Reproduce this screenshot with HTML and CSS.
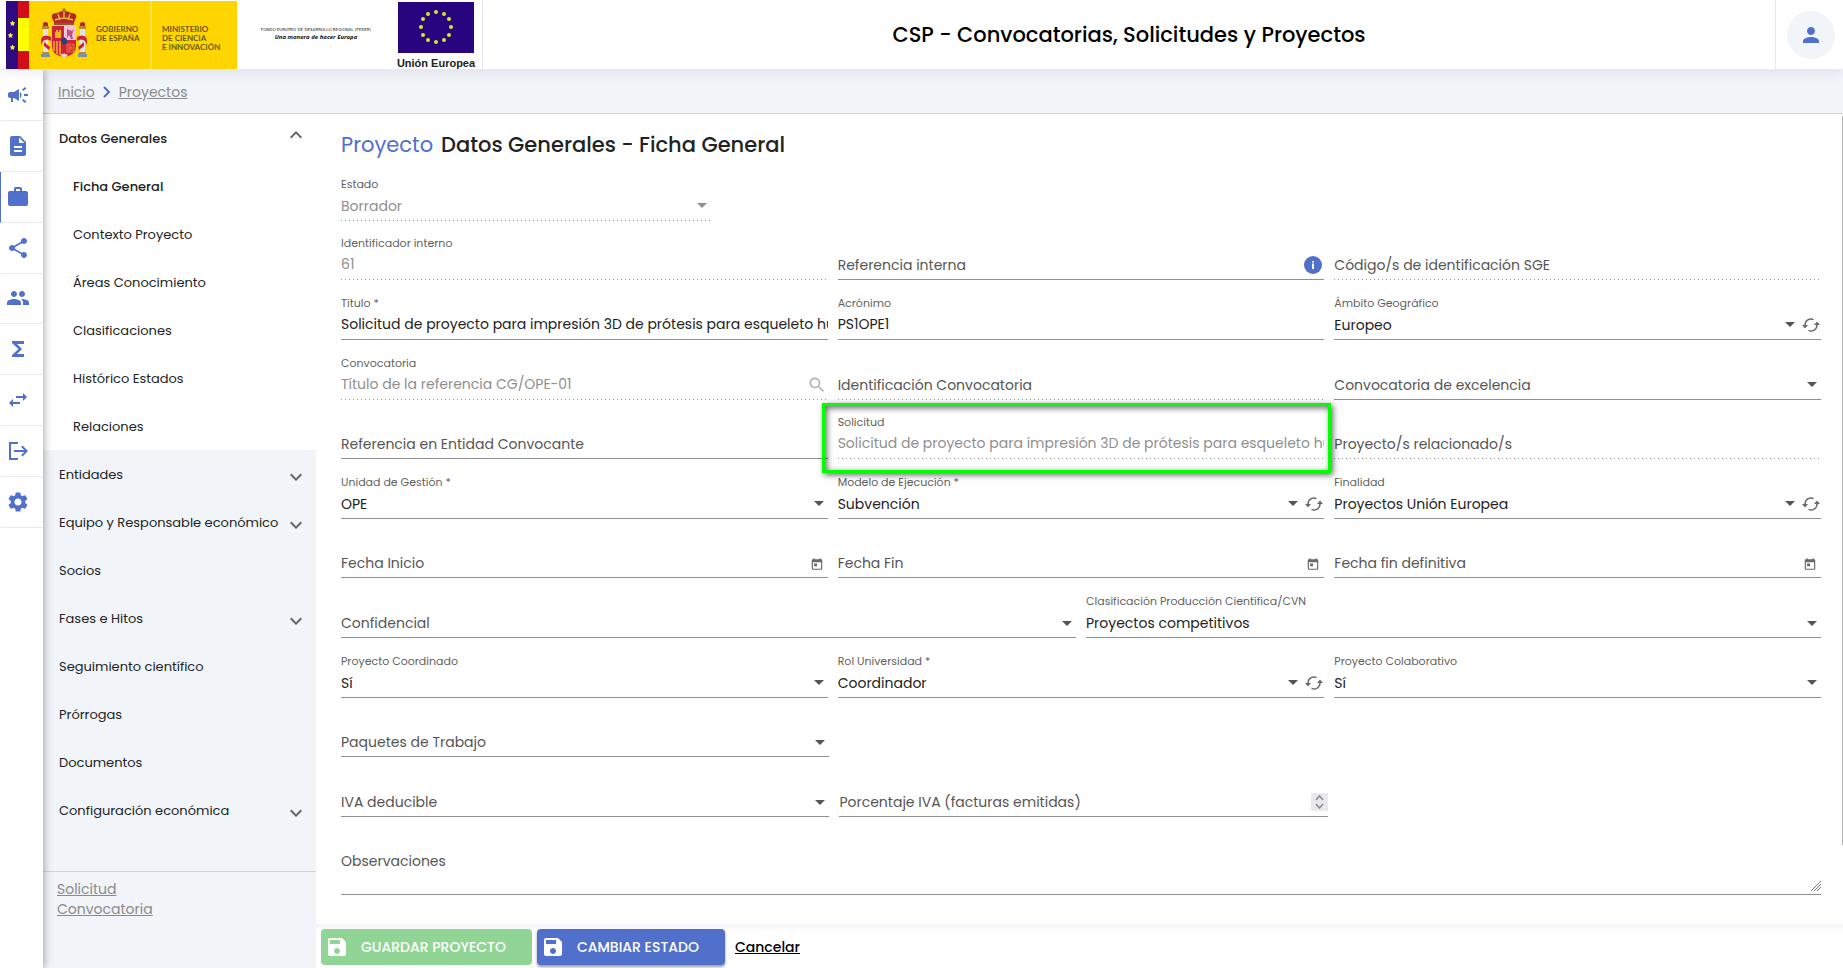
FILE: index.html
```html
<!DOCTYPE html>
<html lang="es">
<head>
<meta charset="utf-8">
<title>CSP - Convocatorias, Solicitudes y Proyectos</title>
<link rel="stylesheet" href="styles.css">
</head>
<body>
<svg class="defs" aria-hidden="true">
  <symbol id="caret" viewBox="0 0 10 5"><path d="M0 0h10L5 5z"/></symbol>
  <symbol id="chev" viewBox="0 0 24 24"><path d="M7.4 8.6 12 13.2l4.6-4.6L18 10l-6 6-6-6z"/></symbol>
  <symbol id="cached" viewBox="0 0 18 14"><path d="M3 8.500V7a6 6 0 0 1 8.500-5.400M15 5.500V7a6 6 0 0 1-8.500 5.400" fill="none" stroke="#6a6a6a" stroke-width="1.500"/><path d="M0 7h6l-3 3.500zM12 7h6l-3-3.500z"/></symbol>
  <symbol id="cal" viewBox="0 0 24 24"><path d="M19 4h-1V2h-2v2H8V2H6v2H5c-1.1 0-2 .9-2 2v14c0 1.1.9 2 2 2h14c1.1 0 2-.9 2-2V6c0-1.1-.9-2-2-2zm0 16H5V9h14v11zM7 11h5v5H7z"/></symbol>
  <symbol id="save" viewBox="0 0 24 24"><path d="M17 3H5c-1.11 0-2 .9-2 2v14c0 1.1.89 2 2 2h14c1.1 0 2-.9 2-2V7l-4-4zm-5 16c-1.66 0-3-1.34-3-3s1.34-3 3-3 3 1.34 3 3-1.34 3-3 3zm3-10H5V5h10v4z"/></symbol>
</svg>

<header class="header">
  <svg class="logos" viewBox="0 0 482 70" role="img" aria-label="Gobierno de España, Fondo Europeo de Desarrollo Regional, Unión Europea">
    <rect x="6" y="1" width="231" height="68" fill="#ffd500"/>
    <rect x="6" y="1" width="12" height="68" fill="#2d0a80"/>
    <rect x="18" y="1" width="11" height="68" fill="#d40d19"/>
    <rect x="18" y="18" width="11" height="33" fill="#ff0"/>
    <g fill="#f4ef3a"><path id="star" d="M12.500 20.500l.9 1.800 2 .2-1.500 1.400.4 2-1.800-1-1.800 1 .4-2-1.500-1.400 2-.2z"/><use href="#star" x="-2" y="12"/><use href="#star" y="24"/></g>
    <path d="M151 1v68" stroke="#fff08a"/>
    <g>
      <path d="M53 20q-4-7 4-7 3-2 7-2t7 2q8 0 4 7l-2 5H55z" fill="#b3282b"/>
      <path d="M55 20q9-4 18 0M64 10v9M58 14l2 6M70 14l-2 6" stroke="#e2b33c" stroke-width="1.500" fill="none"/>
      <path d="M54 23h20v2H54z" fill="#8c5a28"/>
      <path d="M64 8v4M62 10h4" stroke="#8c5a28"/>
      <path d="M52 26h24v21q0 8-12 10-12-2-12-10z" fill="#d3203a"/>
      <path d="M64 26h12v14H64z" fill="#efc4d6"/>
      <path d="M67 29l5 2 2-2-2 6 1 4h-2l-2-4-2 3z" fill="#c0508a"/>
      <path d="M55 38v-6h1v-2h2v2h1v-2h2v8z" fill="#e8b51a"/>
      <path d="M54 41v10M57 41v13M60 41v14" stroke="#f0b42a" stroke-width="1.500"/>
      <path d="M67 44l7 8M74 44l-7 8M67 44h7v8h-7zM70 44v8M67 48h7" stroke="#eb8a2a" stroke-width=".7" fill="none"/>
      <ellipse cx="64" cy="41" rx="3" ry="3.500" fill="#26427a"/>
      <path d="M60 55q4-3 8 0l-4 3z" fill="#ead9c0"/>
      <g id="pillar"><path d="M43 28h5v25h-5z" fill="#dfe2e0"/><path d="M42 26h7v3h-7zM42 52h7v2h-7z" fill="#b98a33"/><path d="M43 23q2-2 5 0v3h-5z" fill="#b3282b"/><path d="M41 54h9v3h-9z" fill="#7b91a5"/><path d="M42 37q4-3 9 0v4q-4-3-8 0l-2 4v-5zM44 42l6 5-1 3-5-4z" fill="#d3203a"/></g>
      <use href="#pillar" transform="translate(128 0) scale(-1 1)"/>
    </g>
    <g class="logo-gov"><text x="96" y="32">GOBIERNO</text><text x="96" y="41">DE ESPAÑA</text><text x="162" y="32">MINISTERIO</text><text x="162" y="41">DE CIENCIA</text><text x="162" y="50">E INNOVACIÓN</text></g>
    <text class="logo-feder" x="316" y="31">FONDO EUROPEO DE DESARROLLO REGIONAL (FEDER)</text>
    <text class="logo-motto" x="316" y="39">Una manera de hacer Europa</text>
    <rect x="398" y="2" width="76" height="51" fill="#28057f"/>
    <g fill="#d8e62e"><circle cx="436" cy="12" r="2"/><circle cx="444" cy="14" r="2"/><circle cx="449" cy="19" r="2"/><circle cx="451" cy="27" r="2"/><circle cx="449" cy="35" r="2"/><circle cx="444" cy="40" r="2"/><circle cx="436" cy="42" r="2"/><circle cx="428" cy="40" r="2"/><circle cx="423" cy="35" r="2"/><circle cx="421" cy="27" r="2"/><circle cx="423" cy="19" r="2"/><circle cx="428" cy="14" r="2"/></g>
    <text class="logo-eu" x="436" y="67">Unión Europea</text>
  </svg>
  <h1 class="app-title">CSP - Convocatorias, Solicitudes y Proyectos</h1>
  <div class="user">
    <button class="avatar" aria-label="Usuario"><svg width="24" height="24" viewBox="0 0 24 24"><path d="M12 12c2.210 0 4-1.790 4-4s-1.790-4-4-4-4 1.790-4 4 1.790 4 4 4zm0 2c-2.670 0-8 1.340-8 4v2h16v-2c0-2.660-5.330-4-8-4z"/></svg></button>
  </div>
</header>

<div class="shell">
  <nav class="rail" aria-label="Módulos">
    <div class="rail-list">
    <a href="#" aria-label="Convocatorias"><svg viewBox="0 0 24 24"><path d="M18 11v2h4v-2h-4zm-2 6.610c.96.71 2.210 1.650 3.200 2.390.4-.53.8-1.070 1.200-1.600-.99-.74-2.240-1.680-3.200-2.400-.4.54-.8 1.080-1.200 1.610zM20.400 5.600c-.4-.53-.8-1.070-1.200-1.600-.99.74-2.240 1.680-3.200 2.400.4.53.8 1.070 1.200 1.600.96-.72 2.210-1.650 3.200-2.400zM4 9c-1.100 0-2 .9-2 2v2c0 1.100.9 2 2 2h1v4h2v-4h1l5 3V6L8 9H4zm11.500 3c0-1.330-.58-2.530-1.500-3.350v6.690c.92-.81 1.500-2.010 1.500-3.340z"/></svg></a>
    <a href="#" aria-label="Solicitudes"><svg viewBox="0 0 24 24"><path d="M14 2H6c-1.100 0-2 .9-2 2v16c0 1.100.9 2 2 2h12c1.100 0 2-.9 2-2V8l-6-6zm2 16H8v-2h8v2zm0-4H8v-2h8v2zm-3-5V3.500L18.500 9H13z"/></svg></a>
    <a href="#" class="active" aria-label="Proyectos"><svg viewBox="0 0 24 24"><path d="M20 6h-4V4c0-1.110-.89-2-2-2h-4c-1.110 0-2 .89-2 2v2H4c-1.110 0-2 .89-2 2v11c0 1.110.89 2 2 2h16c1.110 0 2-.89 2-2V8c0-1.110-.89-2-2-2zm-6 0h-4V4h4v2z"/></svg></a>
    <a href="#" aria-label="Relaciones"><svg viewBox="0 0 24 24"><path d="M18 16.080c-.76 0-1.440.3-1.960.77L8.910 12.700c.05-.23.09-.46.09-.7s-.04-.47-.09-.7l7.050-4.110c.54.5 1.250.81 2.040.81 1.660 0 3-1.340 3-3s-1.340-3-3-3-3 1.340-3 3c0 .24.04.47.09.7L8.040 9.810C7.500 9.310 6.790 9 6 9c-1.660 0-3 1.340-3 3s1.340 3 3 3c.79 0 1.500-.31 2.040-.81l7.120 4.160c-.05.21-.08.43-.08.65 0 1.610 1.310 2.920 2.920 2.920s2.920-1.310 2.920-2.920-1.310-2.920-2.920-2.920z"/></svg></a>
    <a href="#" aria-label="Grupos"><svg viewBox="0 0 24 24"><path d="M16 11c1.660 0 3-1.340 3-3s-1.340-3-3-3-3 1.340-3 3 1.340 3 3 3zm-8 0c1.660 0 3-1.340 3-3S9.660 5 8 5 5 6.340 5 8s1.340 3 3 3zm0 2c-2.330 0-7 1.170-7 3.500V19h14v-2.500c0-2.330-4.670-3.500-7-3.500zm8 0c-.29 0-.62.02-.97.05 1.160.84 1.970 1.970 1.970 3.450V19h6v-2.500c0-2.330-4.670-3.500-7-3.500z"/></svg></a>
    <a href="#" aria-label="Totales"><svg viewBox="0 0 24 24"><path d="M18 4H6v2l6.500 6L6 18v2h12v-3h-7l5-5-5-5h7z"/></svg></a>
    <a href="#" aria-label="Intercambio"><svg viewBox="0 0 24 24"><path d="M7 11l-4 4 4 4v-3h7v-2H7v-3zM21 9l-4-4v3h-7v2h7v3l4-4z"/></svg></a>
    <a href="#" aria-label="Salida"><svg viewBox="0 0 24 24"><path d="M12 3H3v18h9v-2H5V5h7zM8 11v2h10.200l-3.100 3.100 1.400 1.400L22 12l-5.500-5.500-1.400 1.400 3.100 3.100z"/></svg></a>
    <a href="#" aria-label="Configuración"><svg viewBox="0 0 24 24"><path d="M19.140 12.940c.04-.3.06-.61.06-.94 0-.32-.02-.64-.07-.94l2.030-1.580c.18-.14.23-.41.12-.61l-1.920-3.320c-.12-.22-.37-.29-.59-.22l-2.390.96c-.5-.38-1.030-.7-1.620-.94l-.36-2.540c-.04-.24-.24-.41-.48-.41h-3.840c-.24 0-.43.17-.47.41l-.36 2.540c-.59.24-1.130.57-1.620.94l-2.390-.96c-.22-.08-.47 0-.59.22L2.740 8.870c-.12.21-.08.47.12.61l2.030 1.580c-.05.3-.09.63-.09.94s.02.64.07.94l-2.030 1.580c-.18.14-.23.41-.12.61l1.920 3.320c.12.22.37.29.59.22l2.390-.96c.5.38 1.030.7 1.620.94l.36 2.540c.05.24.24.41.48.41h3.840c.24 0 .44-.17.47-.41l.36-2.540c.59-.24 1.130-.56 1.620-.94l2.390.96c.22.08.47 0 .59-.22l1.920-3.320c.12-.22.07-.47-.12-.61l-2.010-1.580zM12 15.600c-1.980 0-3.600-1.620-3.600-3.600s1.620-3.600 3.600-3.600 3.600 1.620 3.600 3.600-1.620 3.600-3.600 3.600z"/></svg></a>
    </div>
  </nav>

  <div class="page">
    <nav class="crumbs" aria-label="Ruta">
      <a href="#">Inicio</a>
      <svg width="8" height="12" viewBox="0 0 8 12"><path d="M1 1l5 5-5 5" fill="none" stroke="#5170cc" stroke-width="2"/></svg>
      <a href="#">Proyectos</a>
    </nav>

    <div class="body">
      <aside class="side">
        <div class="side-open">
          <a class="item strong" href="#">Datos Generales<svg class="up"><use href="#chev"/></svg></a>
          <a class="item sub strong" href="#">Ficha General</a>
          <a class="item sub" href="#">Contexto Proyecto</a>
          <a class="item sub" href="#">Áreas Conocimiento</a>
          <a class="item sub" href="#">Clasificaciones</a>
          <a class="item sub" href="#">Histórico Estados</a>
          <a class="item sub" href="#">Relaciones</a>
        </div>
        <div class="side-rest">
          <a class="item" href="#">Entidades<svg><use href="#chev"/></svg></a>
          <a class="item" href="#">Equipo y Responsable económico<svg><use href="#chev"/></svg></a>
          <a class="item" href="#">Socios</a>
          <a class="item" href="#">Fases e Hitos<svg><use href="#chev"/></svg></a>
          <a class="item" href="#">Seguimiento científico</a>
          <a class="item" href="#">Prórrogas</a>
          <a class="item" href="#">Documentos</a>
          <a class="item" href="#">Configuración económica<svg><use href="#chev"/></svg></a>
        </div>
        <div class="side-links"><a href="#">Solicitud</a><a href="#">Convocatoria</a></div>
      </aside>

      <main class="main">
        <div class="scroll-thumb"></div>
        <h2 class="title"><span class="title-kind">Proyecto</span><span>Datos Generales - Ficha General</span></h2>
        <form class="form" id="ficha">
          <div class="row row-quarter">
            <div class="field disabled"><label for="estado">Estado</label><select id="estado" disabled><option>Borrador</option></select><svg class="caret"><use href="#caret"/></svg></div>
          </div>
          <div class="row">
            <div class="field disabled"><label for="ident">Identificador interno</label><input id="ident" value="61" disabled></div>
            <div class="field empty"><label for="refint">Referencia interna</label><input id="refint"><svg class="info" viewBox="0 0 18 18"><circle cx="9" cy="9" r="9" fill="#5170cc"/><path d="M8 5h2v1.500H8zM8 7.500h2V13H8z" fill="#fff"/></svg></div>
            <div class="field disabled empty"><label for="sge">Código/s de identificación SGE</label><input id="sge" disabled></div>
          </div>
          <div class="row">
            <div class="field"><label for="titulo">Título *</label><input id="titulo" value="Solicitud de proyecto para impresión 3D de prótesis para esqueleto humano"></div>
            <div class="field"><label for="acro">Acrónimo</label><input id="acro" value="PS1OPE1"></div>
            <div class="field"><label for="ambito">Ámbito Geográfico</label><select id="ambito"><option>Europeo</option></select><svg class="caret"><use href="#caret"/></svg><svg class="sync"><use href="#cached"/></svg></div>
          </div>
          <div class="row">
            <div class="field disabled"><label for="conv">Convocatoria</label><input id="conv" value="Título de la referencia CG/OPE-01" disabled><svg class="search" viewBox="0 0 24 24"><path d="M15.500 14h-.79l-.28-.27C15.410 12.590 16 11.110 16 9.500 16 5.910 13.090 3 9.500 3S3 5.910 3 9.500 5.910 16 9.500 16c1.610 0 3.090-.59 4.230-1.570l.27.28v.79l5 4.990L20.490 19l-4.990-5zm-6 0C7.010 14 5 11.990 5 9.500S7.010 5 9.500 5 14 7.010 14 9.500 11.990 14 9.500 14z"/></svg></div>
            <div class="field disabled empty"><label for="idconv">Identificación Convocatoria</label><input id="idconv" disabled></div>
            <div class="field empty"><label for="excel">Convocatoria de excelencia</label><select id="excel"><option></option></select><svg class="caret"><use href="#caret"/></svg></div>
          </div>
          <div class="row">
            <div class="field empty"><label for="refent">Referencia en Entidad Convocante</label><input id="refent"></div>
            <div class="field disabled marked"><label for="solic">Solicitud</label><input id="solic" value="Solicitud de proyecto para impresión 3D de prótesis para esqueleto humano" disabled></div>
            <div class="field disabled empty"><label for="rel">Proyecto/s relacionado/s</label><input id="rel" disabled></div>
          </div>
          <div class="row">
            <div class="field"><label for="unidad">Unidad de Gestión *</label><select id="unidad"><option>OPE</option></select><svg class="caret"><use href="#caret"/></svg></div>
            <div class="field"><label for="modelo">Modelo de Ejecución *</label><select id="modelo"><option>Subvención</option></select><svg class="caret"><use href="#caret"/></svg><svg class="sync"><use href="#cached"/></svg></div>
            <div class="field"><label for="final">Finalidad</label><select id="final"><option>Proyectos Unión Europea</option></select><svg class="caret"><use href="#caret"/></svg><svg class="sync"><use href="#cached"/></svg></div>
          </div>
          <div class="row">
            <div class="field empty"><label for="fini">Fecha Inicio</label><input id="fini"><svg class="cal"><use href="#cal"/></svg></div>
            <div class="field empty"><label for="ffin">Fecha Fin</label><input id="ffin"><svg class="cal"><use href="#cal"/></svg></div>
            <div class="field empty"><label for="fdef">Fecha fin definitiva</label><input id="fdef"><svg class="cal"><use href="#cal"/></svg></div>
          </div>
          <div class="row row-half">
            <div class="field empty"><label for="confi">Confidencial</label><select id="confi"><option></option></select><svg class="caret"><use href="#caret"/></svg></div>
            <div class="field"><label for="cvn">Clasificación Producción Científica/CVN</label><select id="cvn"><option>Proyectos competitivos</option></select><svg class="caret"><use href="#caret"/></svg></div>
          </div>
          <div class="row">
            <div class="field"><label for="coord">Proyecto Coordinado</label><select id="coord"><option>Sí</option></select><svg class="caret"><use href="#caret"/></svg></div>
            <div class="field"><label for="rol">Rol Universidad *</label><select id="rol"><option>Coordinador</option></select><svg class="caret"><use href="#caret"/></svg><svg class="sync"><use href="#cached"/></svg></div>
            <div class="field"><label for="colab">Proyecto Colaborativo</label><select id="colab"><option>Sí</option></select><svg class="caret"><use href="#caret"/></svg></div>
          </div>
          <div class="row row-third">
            <div class="field empty"><label for="paq">Paquetes de Trabajo</label><select id="paq"><option></option></select><svg class="caret"><use href="#caret"/></svg></div>
          </div>
          <div class="row row-third">
            <div class="field empty"><label for="iva">IVA deducible</label><select id="iva"><option></option></select><svg class="caret"><use href="#caret"/></svg></div>
            <div class="field empty"><label for="pct">Porcentaje IVA (facturas emitidas)</label><input id="pct" type="number"><svg class="spin" viewBox="0 0 17 18"><path d="M5 7l3.500-4L12 7M5 11l3.500 4 3.500-4" fill="none" stroke="#8a8a92" stroke-width="1.500"/></svg></div>
          </div>
          <div class="row row-full">
            <div class="field area"><label for="obs">Observaciones</label><textarea id="obs"></textarea><svg class="grip" viewBox="0 0 10 10"><path d="M0 10L10 0M3 10l7-7M6 10l4-4" stroke="#777" fill="none"/></svg></div>
          </div>
        </form>
        <footer class="actions">
          <button class="btn btn-save" type="submit" form="ficha" disabled><svg><use href="#save"/></svg><span>GUARDAR PROYECTO</span></button>
          <button class="btn btn-state" type="button"><svg><use href="#save"/></svg><span>CAMBIAR ESTADO</span></button>
          <a class="cancel" href="#">Cancelar</a>
        </footer>
      </main>
    </div>
  </div>
</div>
</body>
</html>
```

FILE: styles.css
```css
* { box-sizing: border-box; }
body {
  margin: 0;
  min-height: 100vh;
  display: flex;
  flex-direction: column;
  font-family: Poppins, Inter, sans-serif;
  font-size: 14px;
  color: #222;
  background: #fff;
}
.defs { display: none; }
a { color: inherit; }

.header {
  display: flex;
  height: 70px;
  border-bottom: 1px solid #e9e9f1;
  background: #fff;
  box-shadow: 0 2px 12px rgba(60, 60, 100, .1);
  position: relative;
  z-index: 3;
}
.logos { width: 483px; height: 70px; flex: none; border-right: 1px solid #e9e9f1; }
.logo-gov { font: 700 8px Lato, sans-serif; fill: #6b5a10; }
.logo-feder { font: 4px "DejaVu Sans", sans-serif; text-anchor: middle; fill: #222; }
.logo-motto { font: italic 700 6px "Open Sans", sans-serif; text-anchor: middle; fill: #111; }
.logo-eu { font: 700 11px "Liberation Sans", sans-serif; text-anchor: middle; fill: #222; }
.app-title {
  flex: 1;
  margin: 0;
  align-self: center;
  text-align: center;
  font-size: 21px;
  font-weight: 500;
  color: #000;
}
.user { width: 68px; border-left: 1px solid #e9e9f1; display: grid; place-items: center; padding-left: 2px; }
.avatar { width: 48px; height: 48px; padding: 0; border: 0; border-radius: 50%; background: #f1f5f9; display: grid; place-items: center; }
.avatar path { fill: #5170cc; }

.shell { flex: 1; display: flex; }
.rail { width: 43px; flex: none; background: #fff; box-shadow: 1px 0 8px rgba(0, 0, 0, .35); position: relative; z-index: 2; }
.rail-list { display: grid; grid-template-rows: repeat(9, 1fr); height: 458px; }
.rail a { display: flex; align-items: center; padding-left: 5px; border-left: 1px solid transparent; border-bottom: 1px solid #e9e9f1; }
.rail a.active { border-left-color: #5170cc; }
.rail svg { width: 24px; height: 24px; fill: #5170cc; }

.page { flex: 1; min-width: 0; display: flex; flex-direction: column; }
.crumbs {
  height: 44px;
  display: flex;
  align-items: center;
  gap: 8px;
  padding: 1px 0 0 15px;
  background: #f1f5f9;
  border-bottom: 1px solid #d0d4d9;
  color: #8a8a8a;
}
.body { flex: 1; display: flex; }

.side { width: 273px; flex: none; display: flex; flex-direction: column; background: #f1f5f9; }
.side-open { background: #fff; }
.side-rest { flex: 1; }
.item { display: flex; align-items: center; justify-content: space-between; height: 48px; padding: 2px 8px 0 16px; font-size: 13px; text-decoration: none; color: #222; }
.item svg { width: 24px; height: 24px; fill: #666; margin-top: 4px; }
.item .up { transform: rotate(180deg); margin: 0 0 8px; }
.sub { padding-left: 30px; }
.strong { font-weight: 500; }
.side-links { border-top: 1px solid #d0d4d9; height: 97px; padding: 7px 14px; display: flex; flex-direction: column; line-height: 20px; color: #8a8a8a; align-items: flex-start; }

.main { flex: 1; min-width: 0; display: flex; flex-direction: column; position: relative; }
.scroll-thumb { position: absolute; right: 0; top: 2px; width: 1px; height: calc(100% - 125px); background: #b4b4b4; }
.title { display: flex; gap: 8px; margin: 0; padding: 16px 25px 0; height: 47px; font-size: 21px; line-height: 30px; font-weight: 500; }
.title-kind { color: #5170cc; font-weight: 400; }

.form { flex: 1; display: grid; grid-template-rows: repeat(11, 1fr) 78px; padding: 0 22px 29px 25px; }
.row { display: grid; grid-template-columns: repeat(3, minmax(0, 1fr)); column-gap: 10px; }
.row-quarter { grid-template-columns: 25%; }
.row-half { grid-template-columns: repeat(2, minmax(0, 1fr)); }
.row-third { grid-template-columns: repeat(2, 33%); }
.row-full { grid-template-columns: 100%; }

.field {
  display: grid;
  grid-template: 16px 28px / minmax(0, 1fr) auto auto;
  align-content: end;
  align-items: center;
  border-bottom: 1px solid #8f8f8f;
  position: relative;
}
.field label { grid-area: 1 / 1; font-size: 11px; line-height: 16px; color: #5f5f5f; }
.field input, .field select, .field textarea {
  grid-area: 2 / 1;
  width: 100%;
  height: 28px;
  margin: 0;
  padding: 0;
  border: 0;
  outline: 0;
  background: transparent;
  font: inherit;
  font-size: 14px;
  line-height: 28px;
  color: #222;
  appearance: none;
  opacity: 1;
}
.field input { padding-bottom: 2px; }
.field svg { grid-row: 2; }
.field.empty label { grid-area: 2 / 1; font-size: 14px; line-height: 28px; color: #555; pointer-events: none; }
.field input[type="number"] { appearance: textfield; }
.disabled {
  border-bottom-color: transparent;
  background: repeating-linear-gradient(90deg, #999 0 1px, transparent 1px 4px) bottom / 100% 1px no-repeat border-box;
}
.field.disabled input, .field.disabled select { color: #8f8f8f; }
.marked::after {
  content: "";
  position: absolute;
  inset: 3px -7px -15px -16px;
  border: 3px solid #0f0;
  box-shadow: 2px 2px 6px rgba(0, 0, 0, .6), inset 2px 2px 6px rgba(0, 0, 0, .6);
  z-index: 1;
}
.caret { width: 10px; height: 5px; margin-right: 4px; fill: #555; }
.disabled .caret { fill: #8f8f8f; }
.caret:not(:last-child) { margin-right: 7px; }
.sync { width: 18px; height: 14px; margin-right: 1px; fill: #6a6a6a; }
.cal { width: 14px; height: 14px; margin: 2px 4px 0 0; fill: #6a6a6a; }
.info { width: 18px; height: 18px; margin-right: 2px; }
.search { width: 20px; height: 20px; margin-right: 1px; fill: #b5b5b5; }
.spin { width: 17px; height: 18px; background: #e9e9ed; }
.field.area { grid-template: 26px 20px / minmax(0, 1fr) auto; }
.field.area label { font-size: 14px; line-height: 26px; color: #555; }
.field.area textarea { grid-area: 1 / 1 / 3 / 3; height: 46px; resize: none; }
.grip { width: 10px; height: 10px; grid-column: 2; align-self: end; margin-bottom: 3px; }

.actions { display: flex; align-items: flex-start; gap: 5px; padding: 5px; height: 44px; box-shadow: inset 0 8px 8px -6px #eceef3; }
.btn { display: flex; align-items: center; height: 36px; padding: 0 26px 0 4px; border: 0; border-radius: 4px; font: 500 14px Poppins, Inter, sans-serif; color: #fff; }
.btn svg { width: 24px; height: 24px; fill: #fff; margin-right: 12px; }
.btn-save { background: #91d596; }
.btn-state { background: #5170cc; box-shadow: 0 2px 3px rgba(0, 0, 0, .4); }
.cancel { line-height: 36px; padding-left: 5px; font-size: 14px; font-weight: 500; color: #000; }
```
